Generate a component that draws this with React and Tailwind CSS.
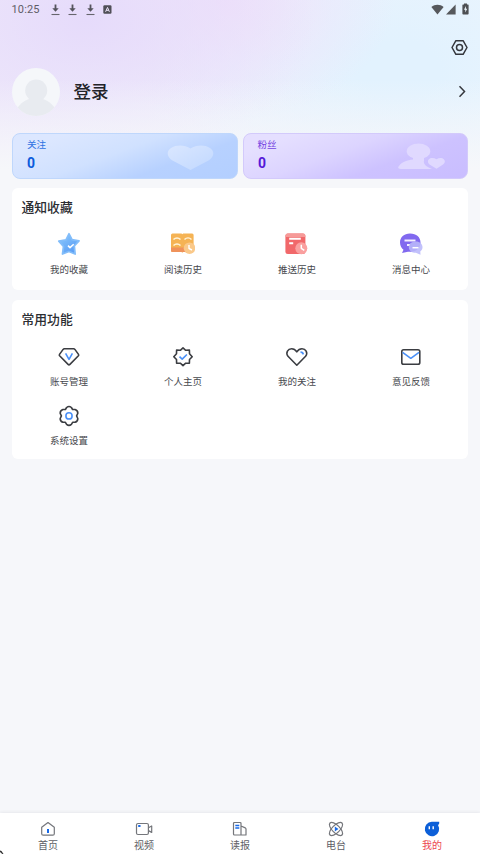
import React from 'react';

const dark = '#3b3d42';
const blue = '#4a90f8';

function Download() {
  return (
    <svg width="9" height="12" viewBox="0 0 9 12" fill="none">
      <path d="M4.5 .5v5" stroke="#55545c" strokeWidth="1.8" />
      <path d="M1.3 4.300h6.400L4.500 7.800z" fill="#55545c" />
      <path d="M.5 10.500h8" stroke="#66656d" strokeWidth="1.100" />
    </svg>
  );
}

function StatusBar() {
  return (
    <div className="flex h-5 items-center justify-between pl-[11.5px] pr-[11px]">
      <div className="flex items-center">
        <span className="w-[29px] font-['Roboto',sans-serif] text-[11px] leading-5 tracking-[0.15px] text-[#5f5d66]">10:25</span>
        <div className="ml-[10px] flex gap-[8.6px]">
          <Download />
          <Download />
          <Download />
        </div>
        <svg className="-mt-px ml-[8px]" width="9" height="9" viewBox="0 0 9 9">
          <rect x=".3" y=".3" width="8.2" height="8.4" rx="1.2" fill="#504f57" />
          <path d="M2.6 6.8 4.5 2.4l1.9 4.4M3.3 5.3h2.4" stroke="#eee6fa" strokeWidth="1" fill="none" />
        </svg>
      </div>
      <div className="-mt-[2px] flex items-center">
        <svg width="13" height="11" viewBox="0 0 13 11">
          <path d="M.4 3C3.7-.1 9.2-.1 12.6 3L6.5 10.4z" fill="#56585c" />
        </svg>
        <svg className="ml-[2px]" width="10" height="11" viewBox="0 0 10 11">
          <path d="M9.6.6v9.9H0z" fill="#56585c" />
        </svg>
        <svg className="ml-[6px]" width="7" height="12" viewBox="0 0 7 12">
          <path d="M2 .5h3v1h1q.6 0 .6.6v8.6q0 .8-.8.8H1.200q-.8 0-.8-.8V2.100q0-.6.6-.6h1z" fill="#4d4f53" />
          <path d="M3.900 3 2 6.700h1.300v2.800L5.200 5.800H3.900z" fill="#eef7fc" />
        </svg>
      </div>
    </div>
  );
}

function Profile() {
  return (
    <div>
      <div className="flex h-[48px] items-center justify-end pr-3 pt-[7px]">
        <svg width="17" height="17" viewBox="0 0 17 17" fill="none" stroke="#34363b" strokeWidth="1.5">
          <path d="M4.900 1.700h7.200L16 8.500l-3.900 6.800H4.900L1 8.500z" strokeLinejoin="round" />
          <circle cx="8.500" cy="8.500" r="3" />
        </svg>
      </div>
      <div className="flex h-12 items-center pl-3 pr-[13px]">
        <svg width="48" height="48" viewBox="0 0 48 48">
          <defs>
            <clipPath id="avatar">
              <circle cx="24" cy="24" r="24" />
            </clipPath>
          </defs>
          <circle cx="24" cy="24" r="24" fill="#f5f7fa" />
          <g clipPath="url(#avatar)" fill="#e8ebf0">
            <circle cx="24.200" cy="22.500" r="11" />
            <path d="M4 42c4-7 10-10.500 15-11.500h10.500C35 32 40 35 44 42v8H4z" />
          </g>
        </svg>
        <span className="-mt-[2px] ml-[13.500px] text-[17.500px] font-medium leading-6 text-[#222328]">登录</span>
        <svg className="-mt-px ml-auto" width="9" height="13" viewBox="0 0 9 13" fill="none">
          <path d="m1.500 1.300 5 5.200-5 5.200" stroke="#36383d" strokeWidth="1.500" />
        </svg>
      </div>
    </div>
  );
}

function Stats() {
  return (
    <div className="mt-[16.500px] grid h-[46px] grid-cols-2 gap-[5px] px-3">
      <div className="flex items-start justify-between rounded-[8px] border border-[#bfd7fc] bg-[linear-gradient(160deg,#dce7ff_15%,#d0e1ff_45%,#b7d1ff_70%,#b3cfff_100%)] pl-[14px] pr-[23px]">
        <div>
          <div className="mt-[3px] text-[9.600px] leading-[15px] text-[#2f73e2]">关注</div>
          <div className="mt-px origin-left scale-x-90 font-['Roboto',sans-serif] text-[15.500px] font-bold leading-[20px] text-[#0b5bdc]">0</div>
        </div>
        <svg className="mt-[11px]" width="47" height="26" viewBox="0 0 47 26">
          <defs>
            <linearGradient id="heartFill" x1="0" y1="0" x2="1" y2="1">
              <stop stopColor="#dae7ff" />
              <stop offset="1" stopColor="#c1d8ff" />
            </linearGradient>
          </defs>
          <path d="M23.500 3.400C18-.3 9-.5 4 3-1 6.500 0 12 5 15.200L23.500 25 42 15.200C47 12 48 6.500 43 3 38-.5 29-.3 23.500 3.400z" fill="url(#heartFill)" />
        </svg>
      </div>
      <div className="flex items-start justify-between rounded-[8px] border border-[#d3cafb] bg-[linear-gradient(160deg,#e5dfff_15%,#dcd4ff_42%,#cdc2ff_66%,#c9bdff_100%)] pl-[14px] pr-[22px]">
        <div>
          <div className="mt-[3px] text-[9.600px] leading-[15px] text-[#7544e2]">粉丝</div>
          <div className="mt-px origin-left scale-x-90 font-['Roboto',sans-serif] text-[15.500px] font-bold leading-[20px] text-[#5517d8]">0</div>
        </div>
        <svg className="mt-[9px]" width="47" height="27" viewBox="0 0 47 27" fill="#e0d9ff">
          <ellipse cx="20.500" cy="8.200" rx="11.800" ry="7.700" />
          <path d="M15 14h11v3.500c-1 4 3 6.500 8 8.500H3c-3 0-3.500-1.500-2-3 3-4 8-6 14-6.500z" />
          <path d="M38.500 16.300c-2.500-1.700-6-1.700-7.700 0-1.500 1.700-1 4 .7 5.200l7 4.200 6.500-4.200c2-1.200 2.500-3.500.8-5.200-1.600-1.700-4.800-1.700-7.300 0z" stroke="#cbc0ff" strokeWidth="2" />
          <path d="M38.500 16.300c-2.500-1.700-6-1.700-7.700 0-1.500 1.700-1 4 .7 5.200l7 4.200 6.500-4.200c2-1.200 2.500-3.500.8-5.200-1.600-1.700-4.800-1.700-7.300 0z" />
        </svg>
      </div>
    </div>
  );
}

const favorites = [
  {
    label: '我的收藏',
    icon: (
      <>
        <defs>
          <linearGradient id="star" x1="0" y1="0" x2=".7" y2="1">
            <stop stopColor="#8ccbfd" />
            <stop offset="1" stopColor="#589bf5" />
          </linearGradient>
        </defs>
        <path d="m12 1.800 3 5.900 7 1.200-4.700 5.100.8 8-6.200-2.500L5.500 22l1-7.500L1.800 9.200 9 7.800z" fill="url(#star)" stroke="#82bdfa" strokeWidth="1.800" strokeLinejoin="round" />
        <path d="m11 13.600 2 2 3.700-3.400" fill="none" stroke="#fff" strokeWidth="1.500" />
      </>
    ),
  },
  {
    label: '阅读历史',
    icon: (
      <>
        <path d="M1.500 1.500h9l.8.700.8-.7h9q1.500 0 1.500 1.500v17h-10.500l-.8.700-.8-.7H1.500Q0 20 0 18.500V3q0-1.500 1.500-1.500z" fill="#f5b354" />
        <path d="M0 15.500h15V20H1.500Q0 20 0 18.500z" fill="#ef925b" />
        <path d="M2.500 7.500c2-2 5-2 7 0m4 0c2-2 5-2 7 0M2.500 13.500c2-2 5-2 7 0" fill="none" stroke="#fff3d9" strokeWidth="1.500" />
        <circle cx="18.500" cy="16.200" r="5.800" fill="#fac98a" />
        <path d="M18 13v3.500l3 1.500" fill="none" stroke="#fff" strokeWidth="1.400" />
      </>
    ),
  },
  {
    label: '推送历史',
    icon: (
      <>
        <rect x=".4" y="1.400" width="20" height="20.600" rx="2.500" fill="#f1686a" />
        <path d="M.5 5V3.700Q.5 1.500 2.800 1.500H18q2.300 0 2.300 2.200V5" fill="#f69a98" />
        <path d="M4.200 6.700h11.600M4.200 11.200h4" stroke="#fff" strokeWidth="2" />
        <circle cx="16.300" cy="16.300" r="6" fill="#faa09f" />
        <path d="M16.300 12.700v3.600l3 2" fill="none" stroke="#fff" strokeWidth="1.500" />
      </>
    ),
  },
  {
    label: '消息中心',
    icon: (
      <>
        <path d="M11 1.500C5 1.500 1 5.300 1 10.500c0 3 1.500 5.700 3.500 7.300L3 21l6-1.300h3c5.500 0 9.500-4 9.500-9.200S17.500 1.500 11 1.500z" fill="#8169ef" />
        <path d="M5.500 8.500h11M8 13h3" stroke="#f4f0ff" strokeWidth="2" />
        <path d="M16.800 9.600c-4.300 0-7 2.400-7 5.600 0 3.500 3 5.500 7 5.500l4.700 2-.2-3.300c1.500-1 2.200-2.500 2.200-4.200 0-3.200-2.700-5.600-6.700-5.600z" fill="#b9b8fb" fillOpacity=".88" />
        <path d="M13.500 15.700h6" stroke="#fff" strokeWidth="1.500" />
      </>
    ),
  },
];

const tools = [
  {
    label: '账号管理',
    icon: (
      <>
        <path d="M7.300 3.800h9.400q.7 0 1.200.6l3.600 5q.5.700-.1 1.400l-8.500 8.600q-.9.900-1.800 0L2.600 10.800q-.6-.7-.1-1.400l3.600-5q.5-.6 1.200-.6z" />
        <path d="m8.600 8.300 3.400 6 3.400-6" stroke={blue} />
      </>
    ),
  },
  {
    label: '个人主页',
    icon: (
      <>
        <path d="m12 2.900 2.700 2.400 3.700-.2.100 3.700 2.700 2.900-2.700 2.800-.1 3.800-3.700-.1L12 20.600l-2.700-2.400-3.700.1-.1-3.800-2.700-2.800 2.700-2.900.1-3.700 3.700.2z" />
        <path d="m8.500 11.600 2.700 2.500 4.700-4.600" stroke={blue} />
      </>
    ),
  },
  {
    label: '我的关注',
    icon: (
      <>
        <path d="M11.800 20.200 3 11.300C.3 7.600 3 3.800 6.600 3.800c2.300 0 3.800 1 5.200 3 1.400-2 2.900-3 5.200-3 3.600 0 6.300 3.800 3.600 7.500z" />
        <path d="M15.500 7.100c1.700 0 2.500.8 2.700 2.300" stroke={blue} strokeWidth="1.900" />
      </>
    ),
  },
  {
    label: '意见反馈',
    icon: (
      <>
        <rect x="2.800" y="4.800" width="18" height="14.500" rx="1.800" />
        <path d="m3.600 7.300 8.200 6 8.200-6" stroke={blue} />
      </>
    ),
  },
  {
    label: '系统设置',
    icon: (
      <>
        <path d="M9.600 3.500Q12 1.500 14.400 3.500L15.600 5.500H18.100Q21 6.500 20.800 9.300L19.600 11.900L20.800 14.500Q21 17.300 18.100 18.300H15.600L14.400 20.300Q12 22.300 9.600 20.300L8.400 18.300H5.900Q3 17.300 3.200 14.500L4.400 11.900L3.200 9.300Q3 6.500 5.900 5.500H8.400Z" />
        <circle cx="12" cy="11.900" r="3.100" stroke={blue} />
      </>
    ),
  },
];

function Entry({ label, icon, line }) {
  return (
    <div className="flex flex-col items-center">
      <svg width="24" height="24" viewBox="0 0 24 24" fill="none" stroke={line ? dark : 'none'} strokeWidth={line ? 1.6 : 0} strokeLinejoin="round">
        {icon}
      </svg>
      <span className={line ? 'mt-[3.500px] text-[9.500px] leading-4 text-[#46484d]' : 'mt-[4.500px] text-[9.500px] leading-4 text-[#46484d]'}>{label}</span>
    </div>
  );
}

const tabs = [
  {
    label: '首页',
    icon: (
      <>
        <path d="M1.700 6.200 8 1.500l6.300 4.700v6.500q0 1.500-1.500 1.500H3.200q-1.500 0-1.500-1.500z" />
        <path d="M8 8v4" stroke="#1769e8" strokeWidth="2" />
      </>
    ),
  },
  {
    label: '视频',
    icon: (
      <>
        <rect x=".5" y="2.500" width="11.900" height="11" rx="1.500" />
        <path d="M12.400 6.800 15.700 5v6.400l-3.300-1.800" />
        <path d="M2.200 5h2.300" stroke="#1769e8" strokeWidth="2" />
      </>
    ),
  },
  {
    label: '读报',
    icon: (
      <>
        <path d="M9 14V2.500q0-1-1-1H2.500q-1 0-1 1V13q0 1 1 1H14V8q0-.7-.7-1.100L9 5z" />
        <path d="M3.300 4.500h4M3.300 7h4" stroke="#1769e8" strokeWidth="1.400" />
      </>
    ),
  },
  {
    label: '电台',
    icon: (
      <>
        <ellipse cx="8" cy="8" rx="8.500" ry="3.800" transform="rotate(45 8 8)" />
        <ellipse cx="8" cy="8" rx="8.500" ry="3.800" transform="rotate(-45 8 8)" />
        <path d="m6.800 5.600 3.700 2.400-3.700 2.500z" fill="#1769e8" stroke="none" />
      </>
    ),
  },
  {
    label: '我的',
    active: true,
    icon: (
      <>
        <path d="M7.800.8h7.400q.6 1.700-1.100 3.400A7.200 7.200 0 1 1 7.800.8z" fill="#0c5fd8" stroke="none" />
        <path d="M5.300 5.200v3M9.200 5.200v3" stroke="#fff" strokeWidth="1.400" />
      </>
    ),
  },
];

function TabBar() {
  return (
    <nav className="grid h-[41px] grid-cols-5 bg-white pt-2 shadow-[0_-1px_3px_rgba(40,45,60,0.07)]">
      {tabs.map((tab) => (
        <div key={tab.label} className="flex flex-col items-center">
          <svg className="shrink-0 overflow-visible" width="16" height="16" viewBox="0 0 16 16" fill="none" stroke="#74767b" strokeWidth="1.200" strokeLinejoin="round">
            {tab.icon}
          </svg>
          <span className={tab.active ? 'text-[10px] leading-[15px] text-[#ec4850]' : 'text-[10px] leading-[15px] text-[#5e6065]'}>{tab.label}</span>
        </div>
      ))}
    </nav>
  );
}

export default function App() {
  return (
    <div className="relative flex h-[854px] w-[480px] flex-col overflow-hidden bg-[#f6f7fa] font-['Noto_Sans_CJK_SC',sans-serif]">
      <div className="h-[188px] shrink-0 bg-[linear-gradient(180deg,transparent_42%,#f6f7fa_90%),radial-gradient(ellipse_230px_150px_at_85px_20px,#e6dbfb,transparent),radial-gradient(ellipse_170px_120px_at_225px_0px,#efe1fa,transparent),radial-gradient(ellipse_260px_190px_at_400px_70px,#e2f2fe_15%,transparent),linear-gradient(90deg,#efeafa,#f0f6fd)]">
        <StatusBar />
        <Profile />
        <Stats />
      </div>
      <main className="flex flex-1 flex-col gap-[10px] px-3">
        <section className="h-[102px] rounded-[6px] bg-white pt-[9px]">
          <h2 className="pl-[9.500px] text-[12.800px] font-medium leading-5 text-[#2b2d32]">通知收藏</h2>
          <div className="mt-[15px] grid grid-cols-4">
            {favorites.map((item) => (
              <Entry key={item.label} {...item} />
            ))}
          </div>
        </section>
        <section className="h-[159px] rounded-[6px] bg-white pt-[9px]">
          <h2 className="pl-[9.500px] text-[12.800px] font-medium leading-5 text-[#2b2d32]">常用功能</h2>
          <div className="mt-[16px] grid grid-cols-4 gap-y-[15.500px]">
            {tools.map((item) => (
              <Entry key={item.label} {...item} line />
            ))}
          </div>
        </section>
      </main>
      <TabBar />
      <svg className="absolute bottom-0 left-0" width="4" height="4" viewBox="0 0 4 4">
        <path d="M0 .5 1.500 1 3.500 4H2.300L0 2z" fill="#333" />
      </svg>
    </div>
  );
}
